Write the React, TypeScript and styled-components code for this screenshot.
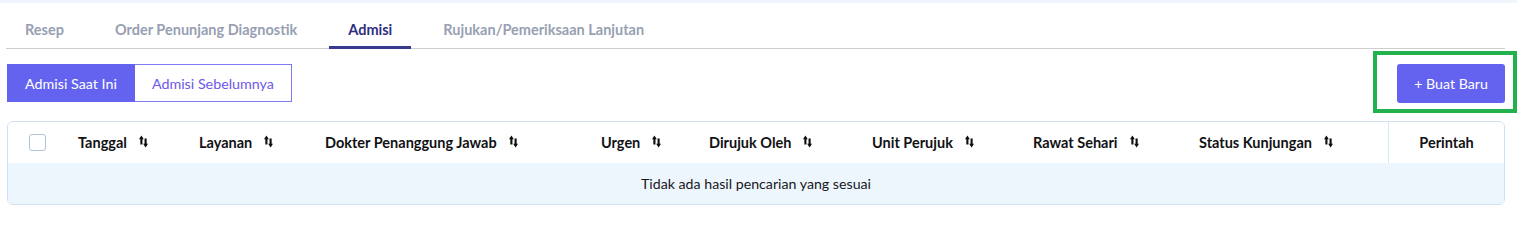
import React from "react";
import styled, { createGlobalStyle } from "styled-components";

const GlobalStyle = createGlobalStyle`
  html, body { margin: 0; padding: 0; background: #ffffff; }
  body { font-family: Lato, "Open Sans", Arial, sans-serif; color: #1b1b1f; }
  * { box-sizing: border-box; }
`;

const Page = styled.div`
  width: 1517px;
  height: 248px;
  overflow: hidden;
  background: #fff;
`;

const TopStrip = styled.div`
  height: 3px;
  background: #eef5fc;
`;

const Content = styled.div`
  padding: 0 12px 0 6px;
`;

const TabBar = styled.div`
  display: flex;
  gap: 13px;
  height: 46px;
  border-bottom: 1px solid #cdcdcd;
`;

const Tab = styled.div<{ $active?: boolean }>`
  padding: 19px 19px 0;
  height: 46px;
  font-size: 14.5px;
  line-height: 16px;
  font-weight: 700;
  color: ${(p) => (p.$active ? "#2e2f80" : "#97a0b2")};
  border-bottom: 3px solid ${(p) => (p.$active ? "#373a8d" : "transparent")};
  margin-bottom: -1px;
  white-space: nowrap;
`;

const ActionRow = styled.div`
  display: flex;
  justify-content: space-between;
  align-items: flex-start;
  margin-top: 15px;
  padding-left: 1px;
`;

const Segmented = styled.div`
  display: flex;
`;

const SegButton = styled.div<{ $active?: boolean }>`
  height: 38px;
  padding: 0 17px;
  display: flex;
  align-items: center;
  font-size: 14.3px;
  color: ${(p) => (p.$active ? "#ffffff" : "#6c58ea")};
  background: ${(p) => (p.$active ? "#6463f0" : "#ffffff")};
  border: 1px solid ${(p) => (p.$active ? "#6463f0" : "#7d7bf4")};
  border-left-width: ${(p) => (p.$active ? "1px" : "0")};
`;

const ButtonWrap = styled.div`
  position: relative;
`;

const PrimaryButton = styled.div`
  height: 39px;
  width: 108px;
  display: flex;
  align-items: center;
  justify-content: center;
  font-size: 14.2px;
  color: #ffffff;
  background: #6463f0;
  border-radius: 3px;
`;

const Highlight = styled.div`
  position: absolute;
  left: -24px;
  top: -13px;
  right: -12px;
  bottom: -10px;
  border: 4px solid #22b14c;
  pointer-events: none;
`;

const Table = styled.div`
  margin-top: 18px;
  margin-left: 1px;
  border: 1px solid #cfe1f2;
  border-radius: 6px;
  overflow: hidden;
`;

const HeaderRow = styled.div`
  display: grid;
  grid-template-columns: 54px 121px 126px 276px 108px 163px 161px 166px 205px 1fr;
  height: 41px;
  background: #ffffff;
`;

const HeadCell = styled.div<{ $center?: boolean; $divider?: boolean }>`
  display: flex;
  align-items: center;
  justify-content: ${(p) => (p.$center ? "center" : "flex-start")};
  padding-left: ${(p) => (p.$center ? "0" : "16px")};
  padding-right: ${(p) => (p.$center ? "0" : "0")};
  font-size: 14.5px;
  font-weight: 700;
  color: #111114;
  white-space: nowrap;
  border-left: ${(p) => (p.$divider ? "1px solid #d8e7f4" : "none")};
`;

const CheckCell = styled.div`
  display: flex;
  align-items: center;
  padding-left: 21px;
`;

const Checkbox = styled.div`
  width: 17px;
  height: 17px;
  border: 1px solid #aec3d8;
  border-radius: 3px;
  background: #fff;
`;

const SortIcon = styled.svg`
  margin-left: 12px;
  margin-top: -2px;
  flex: none;
`;

const EmptyRow = styled.div`
  height: 41px;
  background: #eef6fd;
  display: flex;
  align-items: center;
  justify-content: center;
  font-size: 14.2px;
  color: #17171b;
`;

const Sort = () => (
  <SortIcon width="9" height="13" viewBox="0 0 9 13">
    <path d="M2.4 2.8V9.6" stroke="#0d0d0d" strokeWidth="2.1" />
    <path d="M0 4.2L2.4 0.4L4.8 4.2Z" fill="#0d0d0d" />
    <path d="M6.6 3.4V10.2" stroke="#0d0d0d" strokeWidth="2.1" />
    <path d="M4.2 8.8L6.6 12.6L9 8.8Z" fill="#0d0d0d" />
  </SortIcon>
);

const columns = [
  "Tanggal",
  "Layanan",
  "Dokter Penanggung Jawab",
  "Urgen",
  "Dirujuk Oleh",
  "Unit Perujuk",
  "Rawat Sehari",
  "Status Kunjungan",
];

const tabs = ["Resep", "Order Penunjang Diagnostik", "Admisi", "Rujukan/Pemeriksaan Lanjutan"];

export default function App() {
  return (
    <Page>
      <GlobalStyle />
      <TopStrip />
      <Content>
        <TabBar>
          {tabs.map((t) => (
            <Tab key={t} $active={t === "Admisi"}>
              {t}
            </Tab>
          ))}
        </TabBar>
        <ActionRow>
          <Segmented>
            <SegButton $active>Admisi Saat Ini</SegButton>
            <SegButton>Admisi Sebelumnya</SegButton>
          </Segmented>
          <ButtonWrap>
            <PrimaryButton>+ Buat Baru</PrimaryButton>
            <Highlight />
          </ButtonWrap>
        </ActionRow>
        <Table>
          <HeaderRow>
            <CheckCell>
              <Checkbox />
            </CheckCell>
            {columns.map((c) => (
              <HeadCell key={c}>
                {c}
                <Sort />
              </HeadCell>
            ))}
            <HeadCell $center $divider>
              Perintah
            </HeadCell>
          </HeaderRow>
          <EmptyRow>Tidak ada hasil pencarian yang sesuai</EmptyRow>
        </Table>
      </Content>
    </Page>
  );
}
